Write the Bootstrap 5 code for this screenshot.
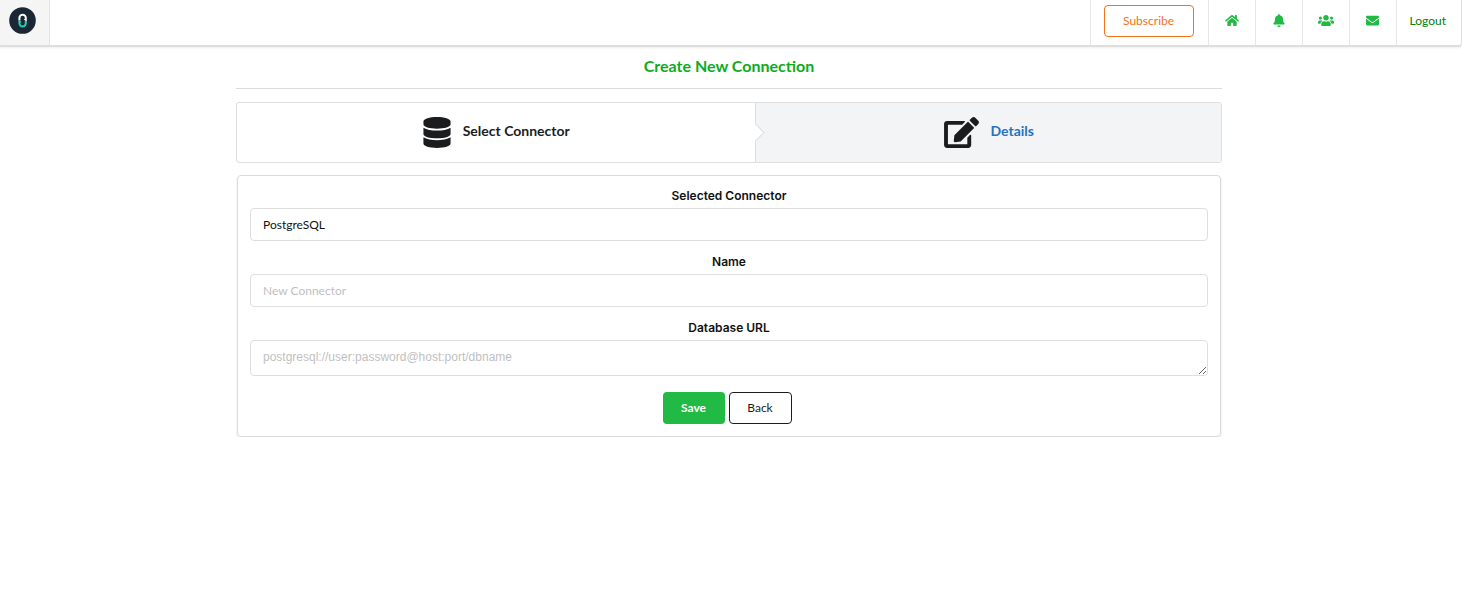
<!DOCTYPE html>
<html lang="en">
<head>
<meta charset="utf-8">
<meta name="viewport" content="width=device-width, initial-scale=1">
<title>Create New Connection</title>
<link href="https://cdn.jsdelivr.net/npm/bootstrap@5.3.0/dist/css/bootstrap.min.css" rel="stylesheet">
<style>
body { font-family: Lato, "Liberation Sans", sans-serif; font-size: 12px; line-height: 18px; color: #1b1c1d; }
.topbar { height: 47px; border-bottom: 2px solid #dededf; border-right: 1px solid #dededf; border-radius: 0 0 4px 0; box-shadow: 0 1px 2px rgba(34,36,38,.08); }
.brand { width: 50px; background: #f5f5f5; border-right: 1px solid #e4e4e5; padding: 0 5px 4px 0; }
.cell { border-left: 1px solid #e8e8e9; padding: 0 14px 4px 13px; color: #21ba45; text-decoration: none; }
.cell-icon { width: 47px; padding: 0 4px 4px; }
.cell-out { color: #008000; padding-right: 15px; }
.btn-ui { height: 32px; font-size: 12px; line-height: 18px; border-radius: 4px; }
.btn-sub { color: #f2711c; border-color: #f2711c; width: 90px; }
.btn-sub:hover { color: #fff; background: #f2711c; }
.page { width: calc(100% - 472px); min-width: 300px; max-width: 1127px; }
.shell { padding-right: 4px; }
.title { font-size: 16px; line-height: 22px; font-weight: 700; color: #0cac21; padding: 8px 0 11px; border-bottom: 1px solid #dcdcdd; margin: 0 0 13px; }
.steps { border: 1px solid #dededf; border-radius: 3px; height: 61px; margin-bottom: 12px; }
.step-item { font-size: 14px; font-weight: 700; gap: 12px; color: #1b1c1d; text-decoration: none; }
.step-item span { padding-bottom: 3px; }
.step-one { flex: 519 1 0; position: relative; border-right: 1px solid #dededf; }
.step-two { flex: 465 1 0; background: #f3f4f5; color: #2672c0; }
.step-one::after { content: ""; position: absolute; right: -7px; top: 23px; width: 13px; height: 13px; background: #fff; border: solid #dededf; border-width: 1px 1px 0 0; transform: rotate(45deg); }
.panel { border: 1px solid #dbdbdc; border-radius: 4px; box-shadow: 0 1px 2px rgba(34,36,38,.15); padding: 12px; margin: 0 1px; }
.lbl { font-family: Inter, "Liberation Sans", sans-serif; font-size: 12px; font-weight: 600; line-height: 16px; margin-bottom: 4px; color: #111; }
.field { margin-bottom: 13px; }
.field .form-control { font-size: 12px; line-height: 18px; padding: 7px 12px; height: 33px; border-color: #dededf; border-radius: 4px; color: #111; }
.field .form-control::placeholder { color: #bfbfbf; }
.field textarea.form-control { font-family: "Liberation Sans", sans-serif; min-height: 36px; height: 36px; overflow: hidden; }
.btn-save { width: 62px; background: #21ba45; color: #fff; font-weight: 700; }
.btn-save:hover { background: #16ab39; color: #fff; }
.btn-back { width: 63px; border-color: #1b1c1d; color: #1b1c1d; }
</style>
<script src="https://cdn.jsdelivr.net/npm/bootstrap@5.3.0/dist/js/bootstrap.bundle.min.js"></script>
</head>
<body>
<nav class="topbar d-flex align-items-stretch" aria-label="Main">
  <a href="#" class="brand d-flex align-items-center justify-content-center" aria-label="Home page">
    <svg width="27" height="27" viewBox="0 0 27 27"><circle cx="13.500" cy="13.500" r="13.300" fill="#1b2735"/><g fill="none" stroke-width="2"><path d="M10.400 13.500V10.900a3.200 3.200 0 0 1 6.400 0V12.800L15.500 12" stroke="#fff"/><path d="M16.800 14v2.300a3.200 3.200 0 0 1-6.400 0V14.600L11.800 15.400" stroke="#24d0b5"/></g></svg>
  </a>
  <div class="cell d-flex align-items-center ms-auto"><button type="button" class="btn btn-ui btn-sub">Subscribe</button></div>
  <a href="#" class="cell cell-icon d-flex align-items-center justify-content-center" aria-label="Home"><svg width="14" height="13" viewBox="0 0 576 512" fill="currentColor"><path d="M280.370 148.260L96 300.110V464a16 16 0 0 0 16 16l112.060-.29a16 16 0 0 0 15.920-16V368a16 16 0 0 1 16-16h64a16 16 0 0 1 16 16v95.640a16 16 0 0 0 16 16.050L464 480a16 16 0 0 0 16-16V300L295.670 148.260a12.190 12.190 0 0 0-15.300 0zM571.600 251.470L488 182.560V44.050a12 12 0 0 0-12-12h-56a12 12 0 0 0-12 12v72.610L318.470 43a48 48 0 0 0-61 0L4.340 251.470a12 12 0 0 0-1.600 16.900l25.500 31A12 12 0 0 0 45.150 301l235.220-193.740a12.190 12.190 0 0 1 15.300 0L530.900 301a12 12 0 0 0 16.900-1.600l25.500-31a12 12 0 0 0-1.700-16.930z"/></svg></a>
  <a href="#" class="cell cell-icon d-flex align-items-center justify-content-center" aria-label="Notifications"><svg width="12" height="13" viewBox="0 0 448 512" fill="currentColor"><path d="M224 512c35.320 0 63.970-28.650 63.970-64H160.030c0 35.350 28.650 64 63.970 64zm215.390-149.710c-19.320-20.760-55.470-51.990-55.470-154.290 0-77.700-54.480-139.900-127.940-155.160V32c0-17.670-14.320-32-31.980-32s-31.980 14.330-31.980 32v20.840C118.560 68.100 64.080 130.300 64.080 208c0 102.300-36.150 133.530-55.470 154.290-6 6.450-8.660 14.160-8.610 21.710.11 16.400 12.980 32 32.100 32h383.800c19.120 0 32-15.600 32.100-32 .05-7.550-2.610-15.270-8.610-21.710z"/></svg></a>
  <a href="#" class="cell cell-icon d-flex align-items-center justify-content-center" aria-label="Team"><svg width="16" height="13" viewBox="0 0 640 512" fill="currentColor"><path d="M96 224c35.300 0 64-28.700 64-64s-28.700-64-64-64-64 28.700-64 64 28.700 64 64 64zm448 0c35.300 0 64-28.700 64-64s-28.700-64-64-64-64 28.700-64 64 28.700 64 64 64zm32 32h-64c-17.600 0-33.500 7.100-45.100 18.600 40.300 22.100 68.900 62 75.100 109.400h66c17.700 0 32-14.300 32-32v-32c0-35.300-28.700-64-64-64zm-256 0c61.900 0 112-50.100 112-112S381.900 32 320 32 208 82.100 208 144s50.100 112 112 112zm76.800 32h-8.300c-20.800 10-43.900 16-68.500 16s-47.600-6-68.500-16h-8.300C179.600 288 128 339.600 128 403.200V432c0 26.500 21.500 48 48 48h288c26.500 0 48-21.500 48-48v-28.800c0-63.600-51.600-115.200-115.200-115.200zm-223.700-13.400C161.500 263.100 145.600 256 128 256H64c-35.300 0-64 28.700-64 64v32c0 17.700 14.300 32 32 32h65.900c6.300-47.400 34.900-87.300 75.200-109.400z"/></svg></a>
  <a href="#" class="cell cell-icon d-flex align-items-center justify-content-center" aria-label="Messages"><svg width="13" height="13" viewBox="0 0 512 512" fill="currentColor"><path d="M502.300 190.800c3.900-3.100 9.700-.2 9.700 4.700V400c0 26.500-21.500 48-48 48H48c-26.500 0-48-21.500-48-48V195.600c0-5 5.700-7.800 9.700-4.700 22.400 17.400 52.100 39.500 154.100 113.600 21.100 15.400 56.700 47.800 92.200 47.600 35.700.3 72-32.800 92.300-47.600 102-74.100 131.600-96.300 154-113.700zM256 320c23.200.4 56.600-29.200 73.400-41.400 132.700-96.300 142.800-104.700 173.400-128.700 5.800-4.500 9.200-11.500 9.200-18.900v-19c0-26.500-21.500-48-48-48H48c-26.500 0-48 21.500-48 48v19c0 7.400 3.400 14.300 9.200 18.900 30.600 23.900 40.700 32.400 173.400 128.700 16.800 12.200 50.200 41.800 73.400 41.400z"/></svg></a>
  <a href="#" class="cell cell-out d-flex align-items-center">Logout</a>
</nav>
<div class="shell">
<main class="page mx-auto">
  <h1 class="title text-center">Create New Connection</h1>
  <div class="steps d-flex overflow-hidden">
    <a href="#" class="step-item step-one d-flex align-items-center justify-content-center"><svg width="28" height="31" viewBox="0 0 448 512" fill="currentColor" aria-hidden="true"><path d="M448 73.143v45.714C448 159.143 347.667 192 224 192S0 159.143 0 118.857V73.143C0 32.857 100.333 0 224 0s224 32.857 224 73.143zM448 176v102.857C448 319.143 347.667 352 224 352S0 319.143 0 278.857V176c48.125 33.143 136.208 48.572 224 48.572S399.874 209.143 448 176zm0 160v102.857C448 479.143 347.667 512 224 512S0 479.143 0 438.857V336c48.125 33.143 136.208 48.572 224 48.572S399.874 369.143 448 336z"/></svg><span>Select Connector</span></a>
    <a href="#" class="step-item step-two d-flex align-items-center justify-content-center" aria-current="step"><svg width="35" height="31" viewBox="0 0 576 512" fill="#1b1c1d" aria-hidden="true"><path d="M402.600 83.200l90.200 90.200c3.800 3.800 3.800 10 0 13.800L274.400 405.600l-92.800 10.300c-12.400 1.400-22.900-9.100-21.500-21.500l10.300-92.800L388.800 83.200c3.800-3.800 10-3.800 13.800 0zm162-22.900l-48.800-48.800c-15.200-15.200-39.900-15.200-55.200 0l-35.400 35.400c-3.800 3.800-3.800 10 0 13.800l90.200 90.200c3.800 3.800 10 3.800 13.800 0l35.400-35.400c15.200-15.300 15.200-40 0-55.200zM384 346.200V448H64V128h229.800c3.200 0 6.200-1.300 8.500-3.500l40-40c7.600-7.600 2.200-20.500-8.500-20.500H48C21.500 64 0 85.500 0 112v352c0 26.500 21.500 48 48 48h352c26.500 0 48-21.500 48-48V306.200c0-10.700-12.900-16-20.500-8.500l-40 40c-2.200 2.300-3.500 5.300-3.500 8.500z"/></svg><span>Details</span></a>
  </div>
  <form class="panel text-center">
    <div class="field"><label class="lbl d-block" for="connector">Selected Connector</label><input id="connector" type="text" class="form-control" value="PostgreSQL" readonly></div>
    <div class="field"><label class="lbl d-block" for="cname">Name</label><input id="cname" type="text" class="form-control" placeholder="New Connector"></div>
    <div class="field mb-0"><label class="lbl d-block" for="dburl">Database URL</label><textarea id="dburl" rows="1" class="form-control" placeholder="postgresql://user:password@host:port/dbname"></textarea></div>
    <div class="d-flex justify-content-center gap-1 mt-3 pe-1"><button type="button" class="btn btn-ui btn-save px-0">Save</button><button type="button" class="btn btn-ui btn-back px-0">Back</button></div>
  </form>
</main>
</div>
</body>
</html>
